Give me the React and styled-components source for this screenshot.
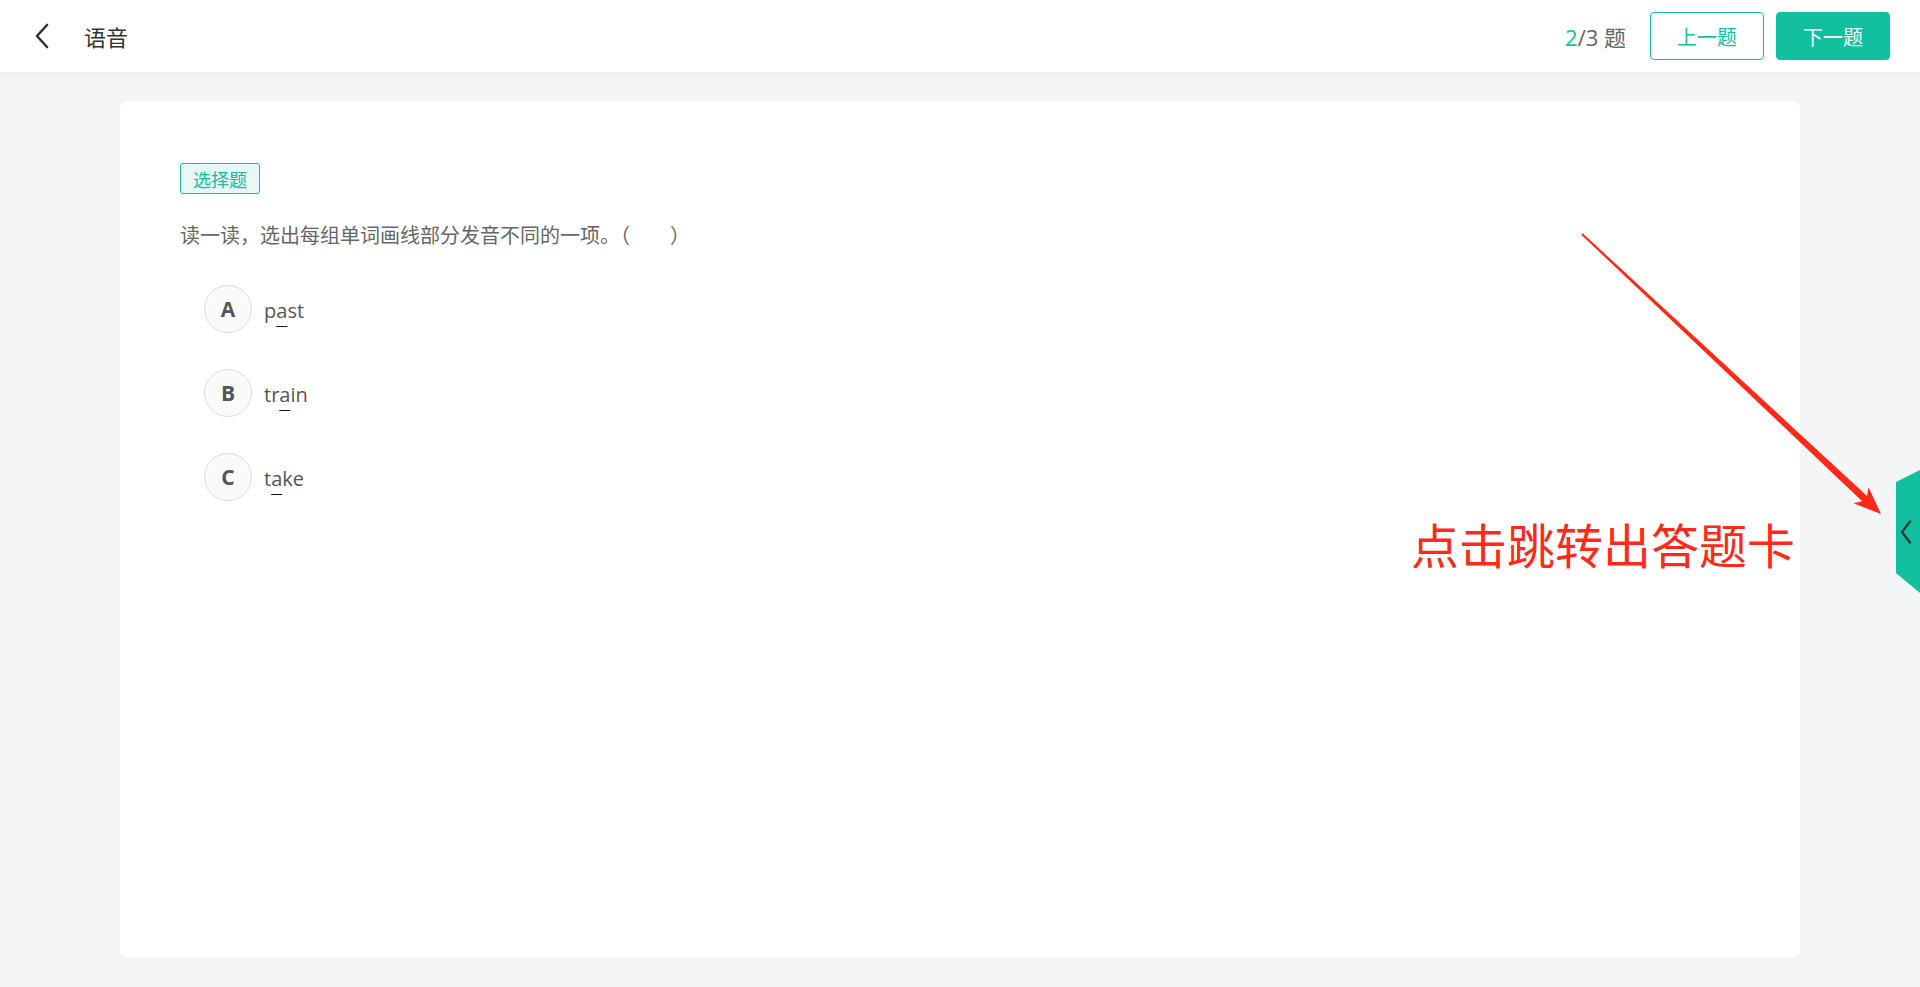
import styled, { createGlobalStyle } from 'styled-components';

const GlobalStyle = createGlobalStyle`
  html, body {
    margin: 0;
    padding: 0;
    background: #f4f5f7;
    font-family: 'Open Sans', 'Noto Sans CJK SC', sans-serif;
  }
`;

const Page = styled.div`
  display: flex;
  flex-direction: column;
  height: 100vh;
  position: relative;
  overflow: hidden;
`;

const Header = styled.header`
  height: 72px;
  flex-shrink: 0;
  display: flex;
  align-items: center;
  justify-content: space-between;
  padding: 0 30px 0 34px;
  background: #fff;
  box-shadow: 0 2px 8px rgba(0, 0, 0, 0.05);
  position: relative;
  z-index: 1;
`;

const TitleGroup = styled.div`
  display: flex;
  align-items: center;
  gap: 34px;
`;

const BackButton = styled.button`
  border: none;
  background: none;
  padding: 0;
  display: flex;
  cursor: pointer;
`;

const Title = styled.h1`
  margin: 0;
  font-family: 'Noto Sans CJK SC', sans-serif;
  font-size: 22px;
  font-weight: 400;
  color: #333;
`;

const Actions = styled.div`
  display: flex;
  align-items: center;
  gap: 12px;
`;

const Counter = styled.span`
  font-size: 22px;
  color: #666;
  margin-right: 12px;
  font-family: 'Open Sans', 'Noto Sans CJK SC', sans-serif;

  b {
    font-weight: 400;
    color: #12bf9e;
  }
`;

const NavButton = styled.button`
  width: 114px;
  height: 48px;
  border-radius: 4px;
  border: 1px solid #12bf9e;
  background: ${(p) => (p.$primary ? '#12bf9e' : '#fff')};
  color: ${(p) => (p.$primary ? '#fff' : '#12bf9e')};
  font-family: 'Noto Sans CJK SC', sans-serif;
  font-size: 20px;
  cursor: pointer;
`;

const Main = styled.main`
  flex: 1;
  padding: 30px 120px;
  display: flex;
  min-height: 0;
`;

const Card = styled.section`
  flex: 1;
  background: #fff;
  border-radius: 6px;
  padding: 61px 60px;
`;

const Tag = styled.span`
  display: inline-flex;
  align-items: center;
  height: 31px;
  padding: 0 12px;
  box-sizing: border-box;
  border: 1px solid #12bf9e;
  border-radius: 3px;
  background: #e8f8f4;
  color: #12bf9e;
  font-family: 'Noto Sans CJK SC', sans-serif;
  font-size: 18px;
`;

const Question = styled.p`
  margin: 26px 0 0;
  font-family: 'Noto Sans CJK SC', sans-serif;
  font-size: 20px;
  line-height: 30px;
  color: #666;
`;

const OptionList = styled.ul`
  list-style: none;
  margin: 35px 0 0 24px;
  padding: 0;
  display: flex;
  flex-direction: column;
  gap: 36px;
`;

const Option = styled.li`
  display: flex;
  align-items: center;
  gap: 12px;
  height: 48px;
`;

const Letter = styled.span`
  width: 48px;
  height: 48px;
  box-sizing: border-box;
  border-radius: 50%;
  border: 1px solid #dcdcdc;
  background: #fafafa;
  display: flex;
  align-items: center;
  justify-content: center;
  font-size: 21px;
  font-weight: 700;
  color: #555;
`;

const Word = styled.span`
  font-size: 20px;
  color: #555;
  padding-top: 2px;

  u {
    text-decoration: underline;
    text-decoration-color: #111;
    text-decoration-thickness: 1px;
    text-underline-offset: 8px;
  }
`;

const SideTab = styled.button`
  position: absolute;
  right: 0;
  top: 470px;
  width: 24px;
  height: 123px;
  border: none;
  padding: 0 0 0 4px;
  background: #12bf9e;
  clip-path: polygon(0 12px, 100% 0, 100% 100%, 0 103px);
  display: flex;
  align-items: center;
  justify-content: flex-start;
  cursor: pointer;
`;

const Overlay = styled.svg`
  position: absolute;
  left: 0;
  top: 0;
  pointer-events: none;
`;

const Note = styled.div`
  position: absolute;
  left: 1411px;
  top: 515px;
  font-family: 'Noto Sans CJK SC', sans-serif;
  font-size: 48px;
  line-height: 1.2;
  color: #ff2a1a;
  white-space: nowrap;
`;

const options = [
  { key: 'A', word: ['p', 'a', 'st'] },
  { key: 'B', word: ['tr', 'a', 'in'] },
  { key: 'C', word: ['t', 'a', 'ke'] },
];

function App() {
  return (
    <>
      <GlobalStyle />
      <Page>
        <Header>
          <TitleGroup>
            <BackButton aria-label="返回">
              <svg width="16" height="26" viewBox="0 0 16 26">
                <path d="M13 2 L3 13 L13 24" fill="none" stroke="#333" strokeWidth="2.6" strokeLinecap="round" strokeLinejoin="round" />
              </svg>
            </BackButton>
            <Title>语音</Title>
          </TitleGroup>
          <Actions>
            <Counter>
              <b>2</b>/3 题
            </Counter>
            <NavButton>上一题</NavButton>
            <NavButton $primary>下一题</NavButton>
          </Actions>
        </Header>

        <Main>
          <Card>
            <Tag>选择题</Tag>
            <Question>读一读，选出每组单词画线部分发音不同的一项。（　　）</Question>
            <OptionList>
              {options.map((o) => (
                <Option key={o.key}>
                  <Letter>{o.key}</Letter>
                  <Word>
                    {o.word[0]}
                    <u>{o.word[1]}</u>
                    {o.word[2]}
                  </Word>
                </Option>
              ))}
            </OptionList>
          </Card>
        </Main>

        <SideTab aria-label="答题卡">
          <svg width="12" height="24" viewBox="0 0 12 24">
            <path d="M10 1.5 L2 12 L10 22.5" fill="none" stroke="#2f3a36" strokeWidth="2.3" strokeLinecap="round" strokeLinejoin="round" />
          </svg>
        </SideTab>

        <Overlay width="1920" height="987" viewBox="0 0 1920 987">
          <polygon
            points="1582.7,233.3 1867.1,495.9 1868.5,487.2 1881,514 1853.5,503.3 1862.2,501.2 1581.3,234.7"
            fill="#ff2a1a"
          />
        </Overlay>
        <Note>点击跳转出答题卡</Note>
      </Page>
    </>
  );
}

export default App;
